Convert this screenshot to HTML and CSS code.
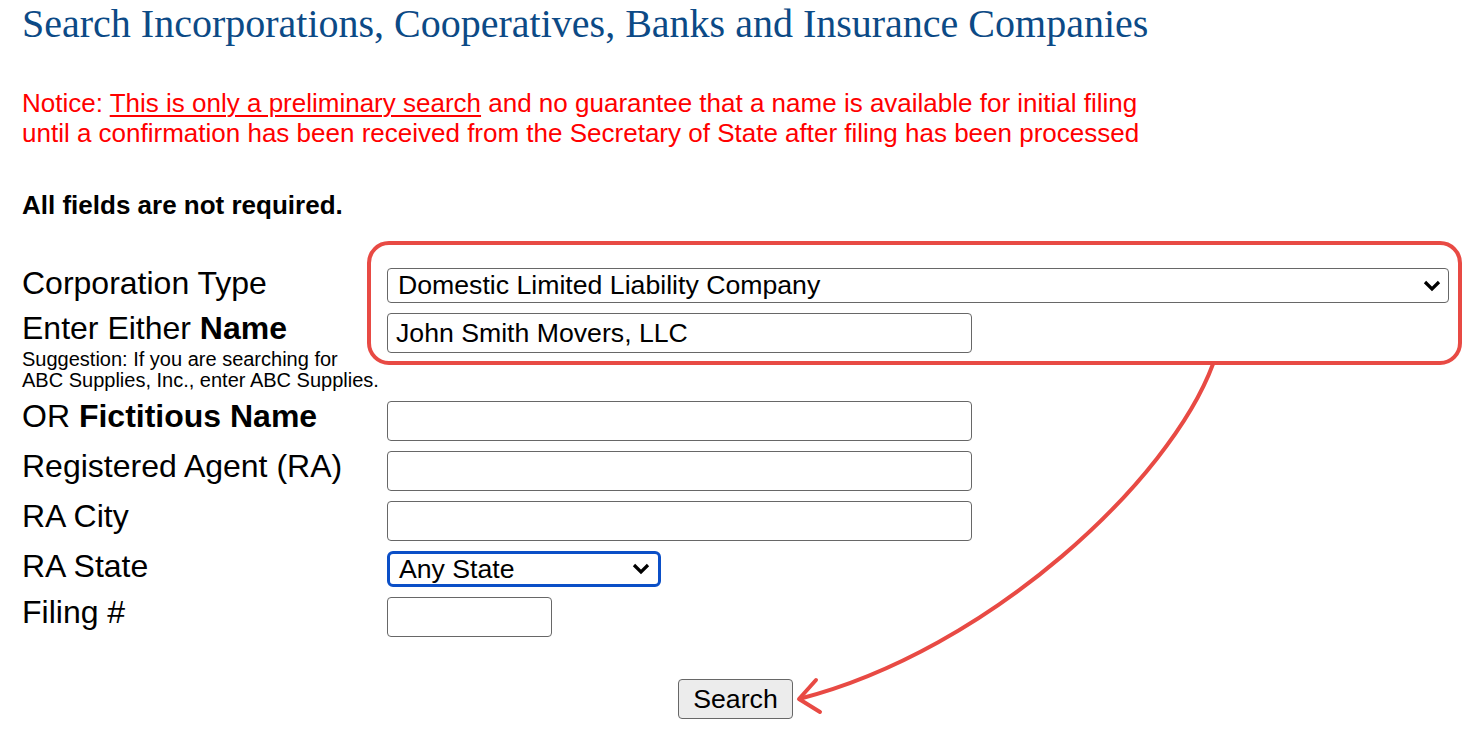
FILE: index.html
```html
<!DOCTYPE html>
<html>
<head>
<meta charset="utf-8">
<link rel="stylesheet" href="styles.css">
</head>
<body>
<div class="page">
  <h1 class="title">Search Incorporations, Cooperatives, Banks and Insurance Companies</h1>
  <p class="notice">Notice: <u>This is only a preliminary search</u> and no guarantee that a name is available for initial filing<br>until a confirmation has been received from the Secretary of State after filing has been processed</p>
  <p class="req">All fields are not required.</p>
  <form class="form">
    <div class="row row-type">
      <div class="label">Corporation Type</div>
      <div class="field select-wrap select-wide">
        <div class="select">Domestic Limited Liability Company</div>
        <svg class="chev" width="18" height="12" viewBox="0 0 18 12"><path d="M2 2 L9 9 L16 2" fill="none" stroke="#000" stroke-width="3.2"/></svg>
      </div>
    </div>
    <div class="row row-name">
      <div class="label-group">
        <div class="label">Enter Either <b>Name</b></div>
        <div class="hint">Suggestion: If you are searching for<br>ABC Supplies, Inc., enter ABC Supplies.</div>
      </div>
      <div class="field"><div class="input input-mid">John Smith Movers, LLC</div></div>
    </div>
    <div class="row">
      <div class="label">OR <b>Fictitious Name</b></div>
      <div class="field"><div class="input input-mid"></div></div>
    </div>
    <div class="row">
      <div class="label">Registered Agent (RA)</div>
      <div class="field"><div class="input input-mid"></div></div>
    </div>
    <div class="row">
      <div class="label">RA City</div>
      <div class="field"><div class="input input-mid"></div></div>
    </div>
    <div class="row">
      <div class="label">RA State</div>
      <div class="field select-wrap">
        <div class="select select-state">Any State</div>
        <svg class="chev chev-state" width="18" height="12" viewBox="0 0 18 12"><path d="M2 2 L9 9 L16 2" fill="none" stroke="#000" stroke-width="3.2"/></svg>
      </div>
    </div>
    <div class="row">
      <div class="label">Filing #</div>
      <div class="field"><div class="input input-small"></div></div>
    </div>
    <div class="actions">
      <div class="button">Search</div>
    </div>
  </form>
  <svg class="annot" width="1464" height="736" viewBox="0 0 1464 736">
    <rect x="369" y="243" width="1091" height="120" rx="20" ry="20" fill="none" stroke="#e84a44" stroke-width="4"/>
    <path d="M1213 364 C1170 480 990 650 799 699" fill="none" stroke="#e84a44" stroke-width="4"/>
    <path d="M816 680 L799 699 L820 712" fill="none" stroke="#e84a44" stroke-width="4" stroke-linecap="round" stroke-linejoin="round"/>
  </svg>
</div>
</body>
</html>
```

FILE: styles.css
```css
html, body {
  margin: 0;
  padding: 0;
  background: #fff;
}
.page {
  position: relative;
  width: 1464px;
  height: 736px;
  overflow: hidden;
  padding-left: 22px;
  box-sizing: border-box;
  font-family: "Liberation Sans", Arial, sans-serif;
  color: #000;
}
.title {
  margin: 2px 0 0 0;
  font-family: "Liberation Serif", "Times New Roman", serif;
  font-weight: normal;
  font-size: 40px;
  line-height: 44px;
  color: #0c4a86;
}
.notice {
  margin: 42px 0 0 0;
  font-size: 26px;
  line-height: 30px;
  color: #ff0000;
}
.notice u {
  text-underline-offset: 3px;
  text-decoration-thickness: 2px;
}
.req {
  margin: 42px 0 0 0;
  font-size: 26px;
  line-height: 30px;
  font-weight: bold;
}
.form {
  margin: 0;
  width: 1427px;
}
.row {
  display: flex;
  align-items: flex-start;
  margin-top: 10px;
}
.row-type {
  margin-top: 48px;
}
.row-name {
  margin-top: 10px;
}
.label, .label-group {
  width: 365px;
  flex: none;
}
.label {
  font-size: 32px;
  line-height: 30px;
  white-space: nowrap;
}
.hint {
  font-size: 20px;
  line-height: 21px;
  margin-top: 6px;
  white-space: nowrap;
}
.field {
  flex: none;
}
.input, .select {
  box-sizing: border-box;
  border: 1px solid #676767;
  border-radius: 4px;
  background: #fff;
  font-size: 26.67px;
  color: #000;
  white-space: nowrap;
}
.input {
  height: 40px;
  line-height: 38px;
  padding: 0 8px;
}
.input-mid {
  width: 585px;
}
.input-small {
  width: 165px;
}
.select-wrap {
  position: relative;
}
.select-wide {
  flex: 1;
}
.select {
  height: 35px;
  line-height: 33px;
  padding: 0 10px;
}
.select-state {
  width: 274px;
  height: 36px;
  line-height: 30px;
  border: 3px solid #0b4fc7;
  border-radius: 6px;
  padding: 0 9px;
}
.chev {
  position: absolute;
  right: 8px;
  top: 12px;
}
.chev-state {
  right: auto;
  left: 245px;
  top: 12px;
}
.actions {
  display: flex;
  justify-content: center;
  margin-top: 42px;
}
.button {
  box-sizing: border-box;
  width: 115px;
  height: 40px;
  line-height: 38px;
  text-align: center;
  font-size: 26.67px;
  background: #ececec;
  border: 1px solid #676767;
  border-radius: 4px;
}
.annot {
  position: absolute;
  left: 0;
  top: 0;
  pointer-events: none;
}
```
